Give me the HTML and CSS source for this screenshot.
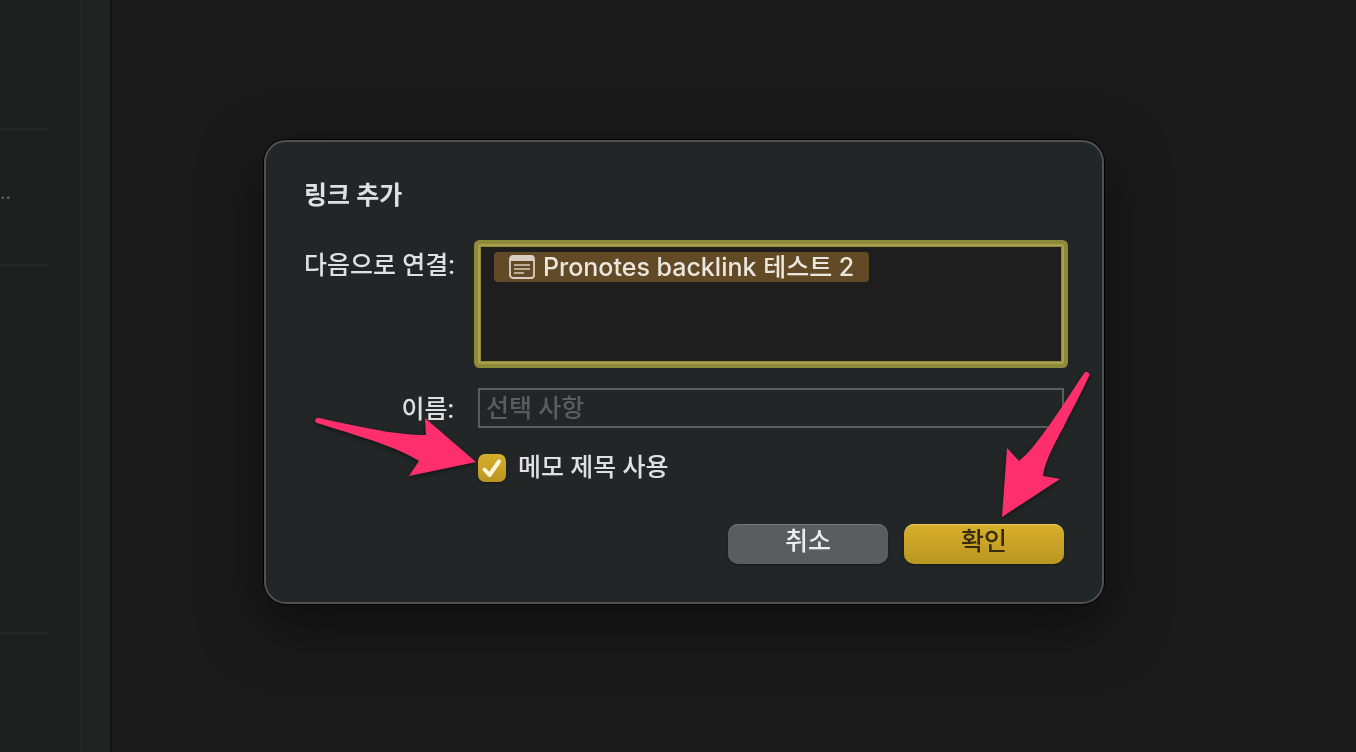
FILE: index.html
```html
<!DOCTYPE html>
<html lang="ko">
<head>
  <meta charset="UTF-8">
  <meta name="viewport" content="width=device-width, initial-scale=1.0">
  <title>링크 추가</title>
  <link rel="stylesheet" href="styles.css">
</head>
<body>
  <div class="app">
    <div class="note-list">
      <div class="note"></div>
      <div class="note">..</div>
      <div class="note note-tall"></div>
    </div>
    <div class="scroll-strip"></div>
    <div class="editor"></div>
  </div>

  <div class="overlay">
    <form class="dialog" role="dialog" aria-labelledby="dialog-title">
      <h1 id="dialog-title">링크 추가</h1>

      <div class="fields">
        <label class="field-label" for="link-to">다음으로 연결:</label>
        <div class="token-field">
          <span class="token">
            <svg class="note-icon" viewBox="0 0 26 24" aria-hidden="true">
              <rect x="1" y="1" width="24" height="22" rx="3" fill="none" stroke="#d8cfc2" stroke-width="1.8"/>
              <path d="M1 6V4a3 3 0 0 1 3-3h18a3 3 0 0 1 3 3v2z" fill="#d8cfc2"/>
              <path d="M5 10h16M5 14h16M5 18h10" fill="none" stroke="#d8cfc2" stroke-width="1.5"/>
            </svg>
            Pronotes backlink 테스트 2
          </span>
          <input class="token-input" type="text" id="link-to">
        </div>

        <label class="field-label" for="link-name">이름:</label>
        <input class="name-input" type="text" id="link-name" placeholder="선택 사항">

        <label class="check-row">
          <span class="check">
            <input type="checkbox" checked>
            <svg viewBox="0 0 28 28" aria-hidden="true">
              <path d="M6.5 15.5l5 5.5L21 7.5" fill="none" stroke="#fff6dc" stroke-width="4" stroke-linecap="round" stroke-linejoin="round"/>
            </svg>
          </span>
          메모 제목 사용
        </label>
      </div>

      <div class="actions">
        <button class="btn" type="button">취소</button>
        <button class="btn btn-primary" type="button">확인</button>
      </div>

      <!-- Arrows -->
      <svg class="arrows" viewBox="264 140 840 464" aria-hidden="true">
        <path d="M319 418C355 426 394 435 426 435L425 418L476 462L409 476L419 461C398 447 352 434 317 423A2.6 2.6 0 0 1 319 418Z"/>
        <path d="M1084 373.5C1070 394 1059 412 1048 427C1037 442 1029 453 1019 461L1007 448L1002 517L1060 479L1043 476C1044 464 1053 446 1063 428C1071 411 1081 394 1089 376A2.7 2.7 0 0 0 1084 373.5Z"/>
      </svg>
    </form>
  </div>
</body>
</html>
```
FILE: styles.css
```css
* {
  box-sizing: border-box;
}
body {
  margin: 0;
  background: #1a1a1a;
  color: #dfe1e1;
  font-family: Roboto, "Noto Sans CJK KR", sans-serif;
  font-size: 25px;
  font-weight: 500;
  line-height: 32px;
}
.app {
  display: flex;
  height: 100vh;
  overflow: hidden;
}
.note-list {
  width: 80px;
  padding-right: 32px;
  background: #1c1f1e;
}
.note {
  height: 136px;
  padding-top: 46px;
  border-bottom: 2px solid #232625;
  color: #5a5d5c;
  font-size: 20px;
}
.note:first-child {
  height: 130px;
}
.note-tall {
  height: 368px;
}
.scroll-strip {
  width: 32px;
  background: #212322;
  border-left: 1px solid #282a29;
  border-right: 2px solid #111212;
}
.editor {
  flex: 1;
}

/* Dialog */
.overlay {
  position: fixed;
  inset: 0;
  display: grid;
  place-items: center;
  padding: 0 0 8px 12px;
}
.dialog {
  position: relative;
  width: 840px;
  max-width: 100%;
  padding: 38px;
  background: #222627;
  border: 2px solid #4f5252;
  border-radius: 22px;
  box-shadow: 0 0 0 1px #000, 0 20px 60px rgba(0, 0, 0, 0.5);
}
h1 {
  margin: 0 0 32px;
  font-size: 25px;
  line-height: 32px;
  font-weight: 700;
}
.fields {
  display: grid;
  grid-template-columns: 150px minmax(0, 1fr);
  column-gap: 24px;
  row-gap: 24px;
}
.field-label {
  padding-top: 6px;
  text-align: right;
  white-space: nowrap;
}
.token-field {
  display: flex;
  align-items: flex-start;
  height: 120px;
  padding: 6px 14px;
  background: #1e1e1e;
  border: 2px solid #aaa14f;
  box-shadow: 0 0 0 4px #8f8a38, inset 0 0 0 1px #8f8a38;
  border-radius: 2px;
}
.token {
  display: flex;
  align-items: center;
  gap: 8px;
  height: 30px;
  padding: 0 15px;
  background: #614a25;
  border-radius: 4px;
  color: #ebe6de;
  font-family: Inter, "Noto Sans CJK KR", sans-serif;
  white-space: nowrap;
}
.note-icon {
  width: 26px;
  height: 24px;
}
input {
  margin: 0;
  color: inherit;
  font: inherit;
  outline: none;
}
.token-input {
  flex: 1;
  min-width: 0;
  height: 30px;
  padding: 0;
  background: none;
  border: 0;
}
.name-input {
  width: 100%;
  height: 40px;
  padding: 0 6px;
  background: none;
  border: 2px solid #5a5d5e;
  border-radius: 0;
}
.name-input::placeholder {
  color: #5a5d5e;
  opacity: 1;
}
.check-row {
  grid-column: 2;
  display: flex;
  align-items: center;
  gap: 12px;
}
.check {
  display: grid;
  width: 28px;
  height: 28px;
}
.check input,
.check svg {
  grid-area: 1 / 1;
  width: 28px;
  height: 28px;
}
.check svg {
  z-index: 1;
  pointer-events: none;
}
.check input {
  appearance: none;
  border-radius: 7px;
  background: linear-gradient(#d8ae2c, #b99522);
  box-shadow: 0 1px 2px rgba(0, 0, 0, 0.4);
}
.actions {
  display: flex;
  justify-content: flex-end;
  gap: 16px;
  margin-top: 40px;
}
.btn {
  width: 160px;
  height: 40px;
  padding: 0 0 4px;
  border: 0;
  border-radius: 10px;
  background: #5a5d5e;
  box-shadow: 0 1px 2px rgba(0, 0, 0, 0.4), inset 0 1px 0 #747677;
  color: #eceded;
  font: inherit;
}
.btn-primary {
  background: linear-gradient(#d9af2b, #b99622);
  box-shadow: 0 1px 2px rgba(0, 0, 0, 0.4), inset 0 1px 0 #e6c867;
  color: #352b0d;
}
.arrows {
  position: absolute;
  inset: -2px;
  fill: #ff2f6d;
  filter: drop-shadow(0 2px 2px rgba(0, 0, 0, 0.4));
  pointer-events: none;
}
```
